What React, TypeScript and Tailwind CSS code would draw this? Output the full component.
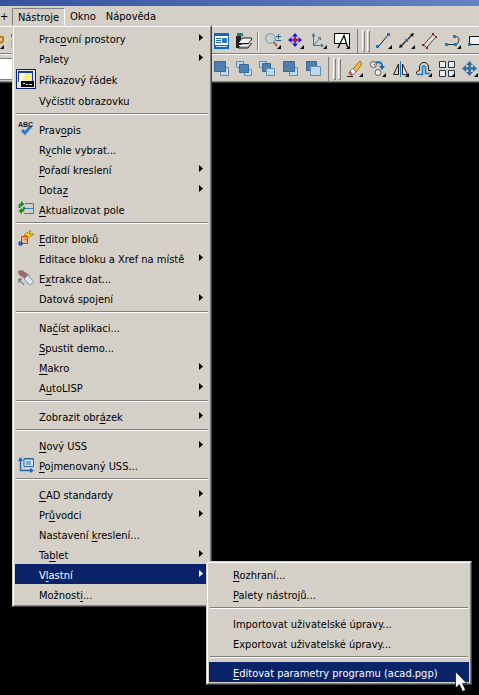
import type { ReactNode } from "react";

type Entry = {
  text: string;
  icon?: ReactNode;
  arrow?: boolean;
  checked?: boolean;
  active?: boolean;
};

/* An ampersand marks the accelerator letter that follows it. */
function Label({ text }: { text: string }) {
  const at = text.indexOf("&");
  if (at < 0) return <span>{text}</span>;
  return (
    <span>
      {text.slice(0, at)}
      <span className="underline decoration-1 underline-offset-2">{text[at + 1]}</span>
      {text.slice(at + 2)}
    </span>
  );
}

function Icon({ children }: { children: ReactNode }) {
  return (
    <svg viewBox="0 0 16 16" className="size-4 shrink-0" fill="none" aria-hidden="true">
      {children}
    </svg>
  );
}

const corner = <path d="M16 12V16H12Z" fill="#000" />;

const consoleIcon = (
  <Icon>
    <path d="M0 0H15V11H0Z" fill="#1638b8" />
    <path d="M1 2H14V11H1Z" fill="#fffce0" />
    <path d="M8 2H14V10H4Z" fill="#f3ee8c" />
    <path d="M3 10H16V16H3Z" fill="#000" />
    <path d="M5 12.500H7M8 13.500H10M11 13.500H14" stroke="#ddd" />
  </Icon>
);

const spellIcon = (
  <Icon>
    <path d="M4 9L7 12L13 5" stroke="#2f79c2" strokeWidth="3" />
    <text x="0" y="6" fontSize="7" fontWeight="bold" fontFamily="Liberation Sans, sans-serif" fill="#222">ABC</text>
  </Icon>
);

const refreshIcon = (
  <Icon>
    <path d="M7 2.500H15.500V12.500H6M6 7.500H15" stroke="#3f79d8" />
    <path d="M1.500 7Q1 3 4 3" stroke="#0a9018" strokeWidth="2" />
    <path d="M3 0L6.500 3L3 6Z" fill="#0a9018" />
    <path d="M6 6Q6 10 3.500 10" stroke="#0a9018" strokeWidth="2" />
    <path d="M4 7L0.500 10L4 13Z" fill="#0a9018" />
  </Icon>
);

const blockEditorIcon = (
  <Icon>
    <path d="M3.500 6.500H9.500V13.500H3.500Z" fill="#f9b08a" stroke="#c04010" />
    <path d="M1 12H4V15H1Z" fill="#1d6fc8" stroke="#0d4f98" />
    <path d="M13 0L6 5L10 6L7 10L16 4L11 4Z" fill="#ffe21c" stroke="#9a6500" strokeWidth="0.700" />
  </Icon>
);

const extractIcon = (
  <Icon>
    <path d="M0 1L4 0L11 5L8 9L1 5Z" fill="#9b6a67" />
    <path d="M6 9L10 5L16 12L12 15Z" fill="#d4e8fa" stroke="#6f93b6" />
    <path d="M1 9L6 15M1 13V9H4" stroke="#555" />
  </Icon>
);

const namedUcsIcon = (
  <Icon>
    <path d="M2.500 1V13.500H14" stroke="#2463a8" strokeWidth="1.300" />
    <path d="M0 4L2.500 0L5 4ZM12 11L16 13.500L12 16Z" fill="#2463a8" />
    <path d="M6 1.500H15.500V9.500H6Z" fill="#d6e9fb" stroke="#2463a8" />
    <path d="M6 2H15M8 5H13M8 7H13" stroke="#2463a8" />
  </Icon>
);

const menuGroups: Entry[][] = [
  [
    { text: "Prac&ovní prostory", arrow: true },
    { text: "Palety", arrow: true },
    { text: "Příkazový řádek", icon: consoleIcon, checked: true },
    { text: "Vyčistit obrazovku" },
  ],
  [
    { text: "Prav&opis", icon: spellIcon },
    { text: "R&ychle vybrat..." },
    { text: "&Pořadí kreslení", arrow: true },
    { text: "Dota&z", arrow: true },
    { text: "&Aktualizovat pole", icon: refreshIcon },
  ],
  [
    { text: "&Editor bloků", icon: blockEditorIcon },
    { text: "Editace bloku a Xref na místě", arrow: true },
    { text: "E&xtrakce dat...", icon: extractIcon },
    { text: "Datová spojení", arrow: true },
  ],
  [
    { text: "Na&číst aplikaci..." },
    { text: "&Spustit demo..." },
    { text: "&Makro", arrow: true },
    { text: "A&utoLISP", arrow: true },
  ],
  [{ text: "Zobrazit obr&ázek", arrow: true }],
  [
    { text: "&Nový USS", arrow: true },
    { text: "&Pojmenovaný USS...", icon: namedUcsIcon },
  ],
  [
    { text: "&CAD standardy", arrow: true },
    { text: "Pr&ůvodci", arrow: true },
    { text: "Nastavení &kreslení..." },
    { text: "Ta&blet", arrow: true },
    { text: "V&lastní", arrow: true, active: true },
    { text: "Možnost&i..." },
  ],
];

const submenuGroups: Entry[][] = [
  [{ text: "&Rozhraní..." }, { text: "&Palety nástrojů..." }],
  [{ text: "Importovat uživatelské úpravy..." }, { text: "Exportovat uživatelské úpravy..." }],
  [{ text: "&Editovat parametry programu (acad.pgp)", active: true }],
];

function MenuRow({ entry }: { entry: Entry }) {
  return (
    <button
      type="button"
      role="menuitem"
      className={`flex w-full items-center text-left whitespace-nowrap ${entry.checked ? "h-[22px]" : "h-5"} ${
        entry.active ? "bg-[#0a246a] text-white" : "text-black"
      }`}
    >
      <span className="w-6 shrink-0 pl-px">
        <span
          className={`flex w-5 items-center justify-center ${
            entry.checked ? "h-5 border border-[#0a246a] bg-[#e8e6e0]" : ""
          }`}
        >
          {entry.icon}
        </span>
      </span>
      <span className="grow pt-[3px]">
        <Label text={entry.text} />
      </span>
      {entry.arrow && (
        <svg viewBox="0 0 4 7" className="mr-1.5 mb-0.5 h-[7px] w-1" fill="currentColor" aria-hidden="true">
          <path d="M0 0L4 3.500L0 7Z" />
        </svg>
      )}
    </button>
  );
}

function Menu({ groups, label }: { groups: Entry[][]; label: string }) {
  return (
    <div
      role="menu"
      aria-label={label}
      className="border border-t-[#d4d0c8] border-r-[#404040] border-b-[#404040] border-l-[#d4d0c8] bg-[#d4d0c8]"
    >
      <div className="border border-t-white border-r-[#808080] border-b-[#808080] border-l-white p-px">
        {groups.map((group, i) => (
          <div key={i}>
            {i > 0 && (
              <div className="px-px pt-[3px] pb-1">
                <hr className="h-0.5 border-t border-b border-t-[#808080] border-b-white" />
              </div>
            )}
            {group.map((entry) => (
              <MenuRow key={entry.text} entry={entry} />
            ))}
          </div>
        ))}
      </div>
    </div>
  );
}

function Tool({ label, children }: { label: string; children: ReactNode }) {
  return (
    <button type="button" aria-label={label} className="flex h-[22px] w-[23px] shrink-0 items-center justify-center">
      <Icon>{children}</Icon>
    </button>
  );
}

function Grip() {
  return (
    <div className="flex h-6 w-[15px] shrink-0 items-center gap-0.5 border-l border-[#808080] pl-1">
      <span className="h-[22px] w-[3px] border border-t-white border-r-[#808080] border-b-[#808080] border-l-white" />
      <span className="h-[22px] w-[3px] border border-t-white border-r-[#808080] border-b-[#808080] border-l-white" />
    </div>
  );
}

const back = { fill: "#4f7fae", stroke: "#3a6896" };
const front = { fill: "#bfd8ea", stroke: "#5f8fb8" };

function Toolbars() {
  return (
    <div className="overflow-hidden">
      <div className="flex h-7 items-center border-t border-b border-t-white border-b-[#808080] pt-0.5">
        <div className="flex w-[209px] shrink-0 items-center">
          <svg viewBox="0 0 12 16" className="h-4 w-3" fill="none" aria-hidden="true">
            <path d="M0 4Q4 3 3 7T0 9" stroke="#b87900" strokeWidth="2" />
            <path d="M0 16H4V12Z" fill="#000" />
            <path d="M11 1H13V4H11Z" fill="#3f79b8" />
            <path d="M11 8H13V15H11Z" fill="#f0a030" />
          </svg>
        </div>
        <Tool label="Vlastnosti">
          <path d="M1.500 0.500H15.500V15.500H1.500Z" fill="#fff" stroke="#1268b8" />
          <path d="M1 0H16V3H1ZM1 12H16V16H1Z" fill="#1268b8" />
          <path d="M3 13.500H14" stroke="#cfe4f6" />
          <path d="M3 5.500H8M3 7.500H8M3 9.500H8" stroke="#2463a8" />
          <path d="M9 5H14V10H9Z" fill="#2b78bd" />
        </Tool>
        <Tool label="Správce sad výkresů">
          <path d="M0 3H5V15H0Z" fill="#222" />
          <path d="M1 0H7V3H1Z" fill="#118878" />
          <path d="M2 15L6 10.500H15.500L12 15Z" fill="#b4b4b4" stroke="#222" />
          <path d="M2 10.500L6 5H15.500V7L12 10.500Z" fill="#f2f2f2" stroke="#222" />
          <path d="M3 12.500H12L15 9" stroke="#fff" />
        </Tool>
        <span className="mx-0.5 h-[18px] w-0.5 shrink-0 border-r border-l border-r-white border-l-[#808080]" />
        <Tool label="Zoom">
          <path d="M8.500 9L12 13" stroke="#a07438" strokeWidth="2" />
          <circle cx="5.500" cy="5.500" r="4.800" fill="#c3d4d9" stroke="#7d8d94" />
          <path d="M11 3.500H16M13.500 1V6M11 7.500H16" stroke="#285f8f" />
          {corner}
        </Tool>
        <Tool label="Posun">
          <path d="M7 3V11M3 7H11" stroke="#1018f8" strokeWidth="1.500" />
          <path d="M7 0L10 3.500H4ZM7 14L10 10.500H4ZM0 7L3.500 4V10ZM14 7L10.500 4V10Z" fill="#1018f8" />
          <path d="M5.500 5H8.500L9 5.500V8.500L8.500 9H5.500L5 8.500V5.500Z" fill="#e81020" />
          {corner}
        </Tool>
        <Tool label="USS">
          <path d="M2.500 2V12.500H12M3 12L9 5" stroke="#3f79b3" />
          <path d="M0.500 3.500L2.500 0L4.500 3.500ZM10 10.500L13 12.500L10 14.500Z" fill="#2f71b3" />
          <path d="M7 4.500H9.500V7" stroke="#3f79b3" />
          {corner}
        </Tool>
        <Tool label="Styl textu">
          <path d="M9 10.500H0.500V0.500H15.500V12" fill="#fff" stroke="#000" />
          <path d="M4 15L10 2.500L13.500 14M6 10.500H12" stroke="#000" strokeWidth="1.200" />
          {corner}
        </Tool>
        <span className="w-1 shrink-0" />
        <Grip />
        <Tool label="Úsečka">
          <path d="M2 14L12 2" stroke="#222" />
          <path d="M0 12H3V15H0ZM11 0H14V3H11Z" fill="#1678d0" />
          {corner}
        </Tool>
        <Tool label="Přímka">
          <path d="M2 13L13 2" stroke="#222" strokeWidth="1.300" />
          <path d="M0 15L1 11L4 14ZM15 0L11 1L14 4Z" fill="#222" />
          <path d="M6 6H9V9H6Z" fill="#1678d0" />
          {corner}
        </Tool>
        <Tool label="Multičára">
          <path d="M1.500 12L11 1.500L14 4L4.500 14.500Z" fill="#e4e1da" stroke="#444" />
          <path d="M0 11H2V13H0ZM4 14H6V16H4ZM10 0H12V2H10ZM13 3H15V5H13Z" fill="#8b2525" />
        </Tool>
        <Tool label="Křivka">
          <path d="M2 11.500H10M9 3.500Q14 3 14 7T10 11" stroke="#333" />
          <path d="M0 10H3V13H0ZM9 10H12V13H9ZM8 2H11V5H8Z" fill="#1678d0" />
          {corner}
        </Tool>
        <Tool label="Obdélník">
          <path d="M1.500 3.500H17V11.500H1.500Z" fill="#edf2f5" stroke="#111" />
          <path d="M0 10H3V13H0Z" fill="#1678d0" />
        </Tool>
      </div>
      <div className="flex h-7 items-center border-t border-b border-t-white border-b-[#808080] pt-0.5">
        <div className="w-[209px] shrink-0">
          <div className="h-[22px] w-3 border-t border-b border-[#808080] bg-white" />
        </div>
        <Tool label="Přenést dopředu">
          <path d="M7.500 6.500H15.500V14.500H7.500Z" {...front} />
          <path d="M1.500 0.500H12.500V10.500H1.500Z" {...back} />
        </Tool>
        <Tool label="Přenést dozadu">
          <path d="M0.500 0.500H7.500V6.500H0.500ZM8.500 8.500H15.500V14.500H8.500Z" {...front} />
          <path d="M3.500 3.500H12.500V11.500H3.500Z" {...back} />
        </Tool>
        <Tool label="Přenést nad objekt">
          <path d="M0.500 0.500H7.500V6.500H0.500ZM8.500 8.500H15.500V14.500H8.500Z" {...front} />
          <path d="M3.500 2.500H11.500V10.500H3.500Z" {...back} />
          <path d="M7.500 7.500H15.500V14.500H7.500Z" {...front} />
        </Tool>
        <Tool label="Přenést pod objekt">
          <path d="M7.500 6.500H15.500V14.500H7.500Z" {...front} />
          <path d="M1.500 0.500H12.500V10.500H1.500Z" {...back} />
        </Tool>
        <Tool label="Text dopředu">
          <path d="M1.500 0.500H11.500V9.500H1.500Z" {...back} />
          <path d="M5.500 5.500H15.500V14.500H5.500Z" {...front} />
        </Tool>
        <span className="w-1 shrink-0" />
        <Grip />
        <Tool label="Vymazat">
          <path d="M6 8L13 0L15 3L9 11Z" fill="#f4bd41" stroke="#a36a11" />
          <path d="M3 10L6 7L9 11L6 14Z" fill="#fff" stroke="#678" />
          <path d="M1 12L3 10L6 14L4 15Z" fill="#d8574f" />
          <path d="M0 15.500H6" stroke="#222" />
          {corner}
        </Tool>
        <Tool label="Kopírovat">
          <circle cx="3.500" cy="3.500" r="3" fill="#eee" stroke="#555" />
          <circle cx="8" cy="11.500" r="3" fill="#eee" stroke="#555" />
          <circle cx="4.500" cy="3.500" r="1" fill="#777" />
          <path d="M6 1.500Q12 0 12 5" stroke="#1768b4" strokeWidth="2" />
          <path d="M9 5H15L12 9Z" fill="#1768b4" />
          {corner}
        </Tool>
        <Tool label="Zrcadlit">
          <path d="M0.500 13.500H5.500V3Z" stroke="#222" />
          <path d="M9.500 13.500H14.500L9.500 3Z" fill="#eee" stroke="#222" />
          <path d="M7.500 0V16" stroke="#1678d0" />
          {corner}
        </Tool>
        <Tool label="Odsazení">
          <path d="M0 13.500Q0 9.500 3.500 9.500V6Q4 1.500 8 1.500T12.500 6V9.500H15" stroke="#222" />
          <path d="M1 13.500H6.500V7Q6.500 5 8 5T9.500 7V12.500H14" stroke="#1678d0" strokeWidth="1.500" />
          {corner}
        </Tool>
        <Tool label="Pole">
          <path
            d="M0.500 0.500H6.500V6.500H0.500ZM9.500 0.500H15.500V6.500H9.500ZM0.500 9.500H6.500V15.500H0.500ZM9.500 9.500H15.500V15.500H9.500Z"
            fill="#e9edf2"
            stroke="#26384e"
          />
          {corner}
        </Tool>
        <Tool label="Posunout">
          <path d="M7.500 3V12M3 7.500H12" stroke="#346ea4" strokeWidth="2.500" />
          <path d="M7.500 0L11 4H4ZM7.500 15L11 11H4ZM0 7.500L4 4V11ZM15 7.500L11 4V11Z" fill="#346ea4" />
          {corner}
        </Tool>
      </div>
      <div className="h-px bg-[#404040]" />
    </div>
  );
}

export default function App() {
  return (
    <main className="relative min-h-screen overflow-hidden bg-black font-['DejaVu_Sans_Condensed','DejaVu_Sans',sans-serif] text-[11px] leading-4 text-black">
      <header className="bg-[#d4d0c8]">
        <div className="h-1.5 bg-linear-to-r from-[#3852a0] to-[#6284c4]" />
        <nav className="flex h-5 items-center pt-px">
          <span className="w-3 shrink-0">+</span>
          <button
            type="button"
            className="h-[18px] w-[53px] border border-t-[#808080] border-r-white border-b-white border-l-[#808080] pt-px"
          >
            Nástroje
          </button>
          <button type="button" className="px-[5px]">
            Okno
          </button>
          <button type="button" className="px-[5px]">
            Nápověda
          </button>
        </nav>
        <Toolbars />
      </header>

      <div className="absolute top-[25px] left-3 w-[200px]">
        <Menu groups={menuGroups} label="Nástroje" />
      </div>
      <div className="absolute top-[561px] left-[206px] w-[266px]">
        <Menu groups={submenuGroups} label="Vlastní" />
      </div>
      <svg viewBox="0 0 12 21" className="absolute top-[671px] left-[455px] h-[21px] w-3" aria-hidden="true">
        <path d="M0.500 0.500V17L4.500 13.500L7.500 20.500L10.500 19L7.500 12.500H12Z" fill="#fff" stroke="#000" strokeWidth="0.700" />
      </svg>
    </main>
  );
}
